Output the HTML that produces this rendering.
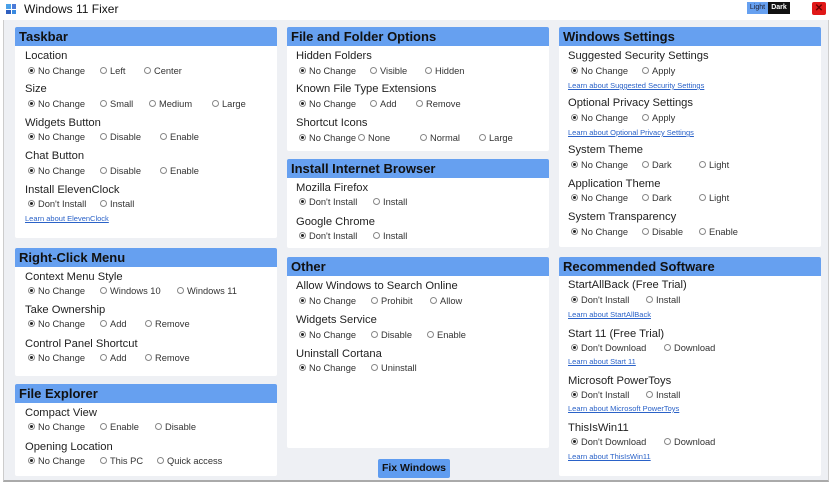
<!DOCTYPE html>
<html><head><meta charset="utf-8"><style>
*{margin:0;padding:0;box-sizing:border-box}
body{width:836px;height:484px;overflow:hidden;background:#fff;font-family:"Liberation Sans",sans-serif;position:relative;color:#111}
.win{position:absolute;left:3px;top:20px;width:826px;height:462px;background:#eef0f4;border-left:1px solid #ccc;border-right:1px solid #ccc;border-bottom:2px solid #aaa}
.p{position:absolute;background:#fff;border-radius:2px}
.h{position:absolute;left:0;right:0;top:0;height:19px;background:#66a0f0;font-weight:bold;font-size:13px;line-height:19px;padding-left:4px;color:#111;border-radius:2px 2px 0 0}
.t{position:absolute;white-space:nowrap;line-height:14px}
.l{font-size:11.2px;color:#222}
.o{font-size:9.3px;color:#333;padding-left:10px}
.o::before{content:"";position:absolute;left:0;top:3px;width:7px;height:7px;border:1px solid #888;border-radius:50%;box-sizing:border-box}
.o.s::after{content:"";position:absolute;left:2px;top:5px;width:3px;height:3px;background:#222;border-radius:50%}
.a{font-size:7.5px;color:#2a62c8;text-decoration:underline}
</style></head><body>
<div style="position:absolute;left:6px;top:4px;width:5px;height:5px;background:#4aa0e8"></div>
<div style="position:absolute;left:12px;top:4px;width:4px;height:5px;background:#4a7ad8"></div>
<div style="position:absolute;left:6px;top:10px;width:5px;height:4px;background:#3060c0"></div>
<div style="position:absolute;left:12px;top:10px;width:4px;height:4px;background:#3a8ae0"></div>
<div class="t" style="left:24px;top:1px;font-size:12px;line-height:16px">Windows 11 Fixer</div>
<div style="position:absolute;left:747px;top:2px;width:21px;height:12px;background:#66a0f0;font-size:7px;line-height:12px;text-align:center;color:#223">Light</div>
<div style="position:absolute;left:768px;top:2px;width:22px;height:12px;background:#111;font-size:7px;line-height:12px;text-align:center;color:#fff;font-weight:bold">Dark</div>
<div style="position:absolute;left:812px;top:2px;width:14px;height:13px;background:#e01818;border-radius:2px;font-size:10px;line-height:13px;text-align:center;color:#600;font-weight:bold">✕</div>
<div class="win"></div>

<div class="p" style="left:15px;top:27px;width:262px;height:211px"><div class="h">Taskbar</div></div>
<div class="p" style="left:15px;top:248px;width:262px;height:128px"><div class="h">Right-Click Menu</div></div>
<div class="p" style="left:15px;top:384px;width:262px;height:92px"><div class="h">File Explorer</div></div>
<div class="p" style="left:287px;top:27px;width:262px;height:124px"><div class="h">File and Folder Options</div></div>
<div class="p" style="left:287px;top:159px;width:262px;height:89px"><div class="h">Install Internet Browser</div></div>
<div class="p" style="left:287px;top:257px;width:262px;height:191px"><div class="h">Other</div></div>
<div class="p" style="left:559px;top:27px;width:262px;height:220px"><div class="h">Windows Settings</div></div>
<div class="p" style="left:559px;top:257px;width:262px;height:219px"><div class="h">Recommended Software</div></div>

<div style="position:absolute;left:378px;top:459px;width:72px;height:19px;background:#5f9cf0;border-radius:2px;font-size:10.5px;font-weight:bold;line-height:19px;text-align:center">Fix Windows</div>

<div class="t l" style="left:25px;top:49px">Location</div>
<div class="t o s" style="left:28px;top:64px">No Change</div><div class="t o" style="left:100px;top:64px">Left</div><div class="t o" style="left:144px;top:64px">Center</div>
<div class="t l" style="left:25px;top:82px">Size</div>
<div class="t o s" style="left:28px;top:97px">No Change</div><div class="t o" style="left:100px;top:97px">Small</div><div class="t o" style="left:149px;top:97px">Medium</div><div class="t o" style="left:212px;top:97px">Large</div>
<div class="t l" style="left:25px;top:116px">Widgets Button</div>
<div class="t o s" style="left:28px;top:130px">No Change</div><div class="t o" style="left:100px;top:130px">Disable</div><div class="t o" style="left:160px;top:130px">Enable</div>
<div class="t l" style="left:25px;top:149px">Chat Button</div>
<div class="t o s" style="left:28px;top:164px">No Change</div><div class="t o" style="left:100px;top:164px">Disable</div><div class="t o" style="left:160px;top:164px">Enable</div>
<div class="t l" style="left:25px;top:183px">Install ElevenClock</div>
<div class="t o s" style="left:28px;top:197px">Don't Install</div><div class="t o" style="left:100px;top:197px">Install</div>
<div class="t a" style="left:25px;top:212px">Learn about ElevenClock</div>

<div class="t l" style="left:25px;top:270px">Context Menu Style</div>
<div class="t o s" style="left:28px;top:284px">No Change</div><div class="t o" style="left:100px;top:284px">Windows 10</div><div class="t o" style="left:177px;top:284px">Windows 11</div>
<div class="t l" style="left:25px;top:303px">Take Ownership</div>
<div class="t o s" style="left:28px;top:317px">No Change</div><div class="t o" style="left:100px;top:317px">Add</div><div class="t o" style="left:145px;top:317px">Remove</div>
<div class="t l" style="left:25px;top:337px">Control Panel Shortcut</div>
<div class="t o s" style="left:28px;top:351px">No Change</div><div class="t o" style="left:100px;top:351px">Add</div><div class="t o" style="left:145px;top:351px">Remove</div>

<div class="t l" style="left:25px;top:406px">Compact View</div>
<div class="t o s" style="left:28px;top:420px">No Change</div><div class="t o" style="left:100px;top:420px">Enable</div><div class="t o" style="left:155px;top:420px">Disable</div>
<div class="t l" style="left:25px;top:440px">Opening Location</div>
<div class="t o s" style="left:28px;top:454px">No Change</div><div class="t o" style="left:100px;top:454px">This PC</div><div class="t o" style="left:157px;top:454px">Quick access</div>

<div class="t l" style="left:296px;top:49px">Hidden Folders</div>
<div class="t o s" style="left:299px;top:64px">No Change</div><div class="t o" style="left:370px;top:64px">Visible</div><div class="t o" style="left:425px;top:64px">Hidden</div>
<div class="t l" style="left:296px;top:82px">Known File Type Extensions</div>
<div class="t o s" style="left:299px;top:97px">No Change</div><div class="t o" style="left:370px;top:97px">Add</div><div class="t o" style="left:416px;top:97px">Remove</div>
<div class="t l" style="left:296px;top:116px">Shortcut Icons</div>
<div class="t o s" style="left:299px;top:131px">No Change</div><div class="t o" style="left:358px;top:131px">None</div><div class="t o" style="left:420px;top:131px">Normal</div><div class="t o" style="left:479px;top:131px">Large</div>
<div class="t l" style="left:296px;top:181px">Mozilla Firefox</div>
<div class="t o s" style="left:299px;top:195px">Don't Install</div><div class="t o" style="left:373px;top:195px">Install</div>
<div class="t l" style="left:296px;top:215px">Google Chrome</div>
<div class="t o s" style="left:299px;top:229px">Don't Install</div><div class="t o" style="left:373px;top:229px">Install</div>
<div class="t l" style="left:296px;top:279px">Allow Windows to Search Online</div>
<div class="t o s" style="left:299px;top:294px">No Change</div><div class="t o" style="left:371px;top:294px">Prohibit</div><div class="t o" style="left:430px;top:294px">Allow</div>
<div class="t l" style="left:296px;top:313px">Widgets Service</div>
<div class="t o s" style="left:299px;top:328px">No Change</div><div class="t o" style="left:371px;top:328px">Disable</div><div class="t o" style="left:427px;top:328px">Enable</div>
<div class="t l" style="left:296px;top:347px">Uninstall Cortana</div>
<div class="t o s" style="left:299px;top:361px">No Change</div><div class="t o" style="left:371px;top:361px">Uninstall</div>

<div class="t l" style="left:568px;top:49px">Suggested Security Settings</div>
<div class="t o s" style="left:571px;top:64px">No Change</div><div class="t o" style="left:642px;top:64px">Apply</div>
<div class="t a" style="left:568px;top:79px">Learn about Suggested Security Settings</div>
<div class="t l" style="left:568px;top:96px">Optional Privacy Settings</div>
<div class="t o s" style="left:571px;top:111px">No Change</div><div class="t o" style="left:642px;top:111px">Apply</div>
<div class="t a" style="left:568px;top:126px">Learn about Optional Privacy Settings</div>
<div class="t l" style="left:568px;top:143px">System Theme</div>
<div class="t o s" style="left:571px;top:158px">No Change</div><div class="t o" style="left:642px;top:158px">Dark</div><div class="t o" style="left:699px;top:158px">Light</div>
<div class="t l" style="left:568px;top:177px">Application Theme</div>
<div class="t o s" style="left:571px;top:191px">No Change</div><div class="t o" style="left:642px;top:191px">Dark</div><div class="t o" style="left:699px;top:191px">Light</div>
<div class="t l" style="left:568px;top:210px">System Transparency</div>
<div class="t o s" style="left:571px;top:225px">No Change</div><div class="t o" style="left:642px;top:225px">Disable</div><div class="t o" style="left:699px;top:225px">Enable</div>

<div class="t l" style="left:568px;top:278px">StartAllBack (Free Trial)</div>
<div class="t o s" style="left:571px;top:293px">Don't Install</div><div class="t o" style="left:646px;top:293px">Install</div>
<div class="t a" style="left:568px;top:308px">Learn about StartAllBack</div>
<div class="t l" style="left:568px;top:327px">Start 11 (Free Trial)</div>
<div class="t o s" style="left:571px;top:341px">Don't Download</div><div class="t o" style="left:664px;top:341px">Download</div>
<div class="t a" style="left:568px;top:355px">Learn about Start 11</div>
<div class="t l" style="left:568px;top:374px">Microsoft PowerToys</div>
<div class="t o s" style="left:571px;top:388px">Don't Install</div><div class="t o" style="left:646px;top:388px">Install</div>
<div class="t a" style="left:568px;top:402px">Learn about Microsoft PowerToys</div>
<div class="t l" style="left:568px;top:421px">ThisIsWin11</div>
<div class="t o s" style="left:571px;top:435px">Don't Download</div><div class="t o" style="left:664px;top:435px">Download</div>
<div class="t a" style="left:568px;top:450px">Learn about ThisIsWin11</div>
</body></html>
